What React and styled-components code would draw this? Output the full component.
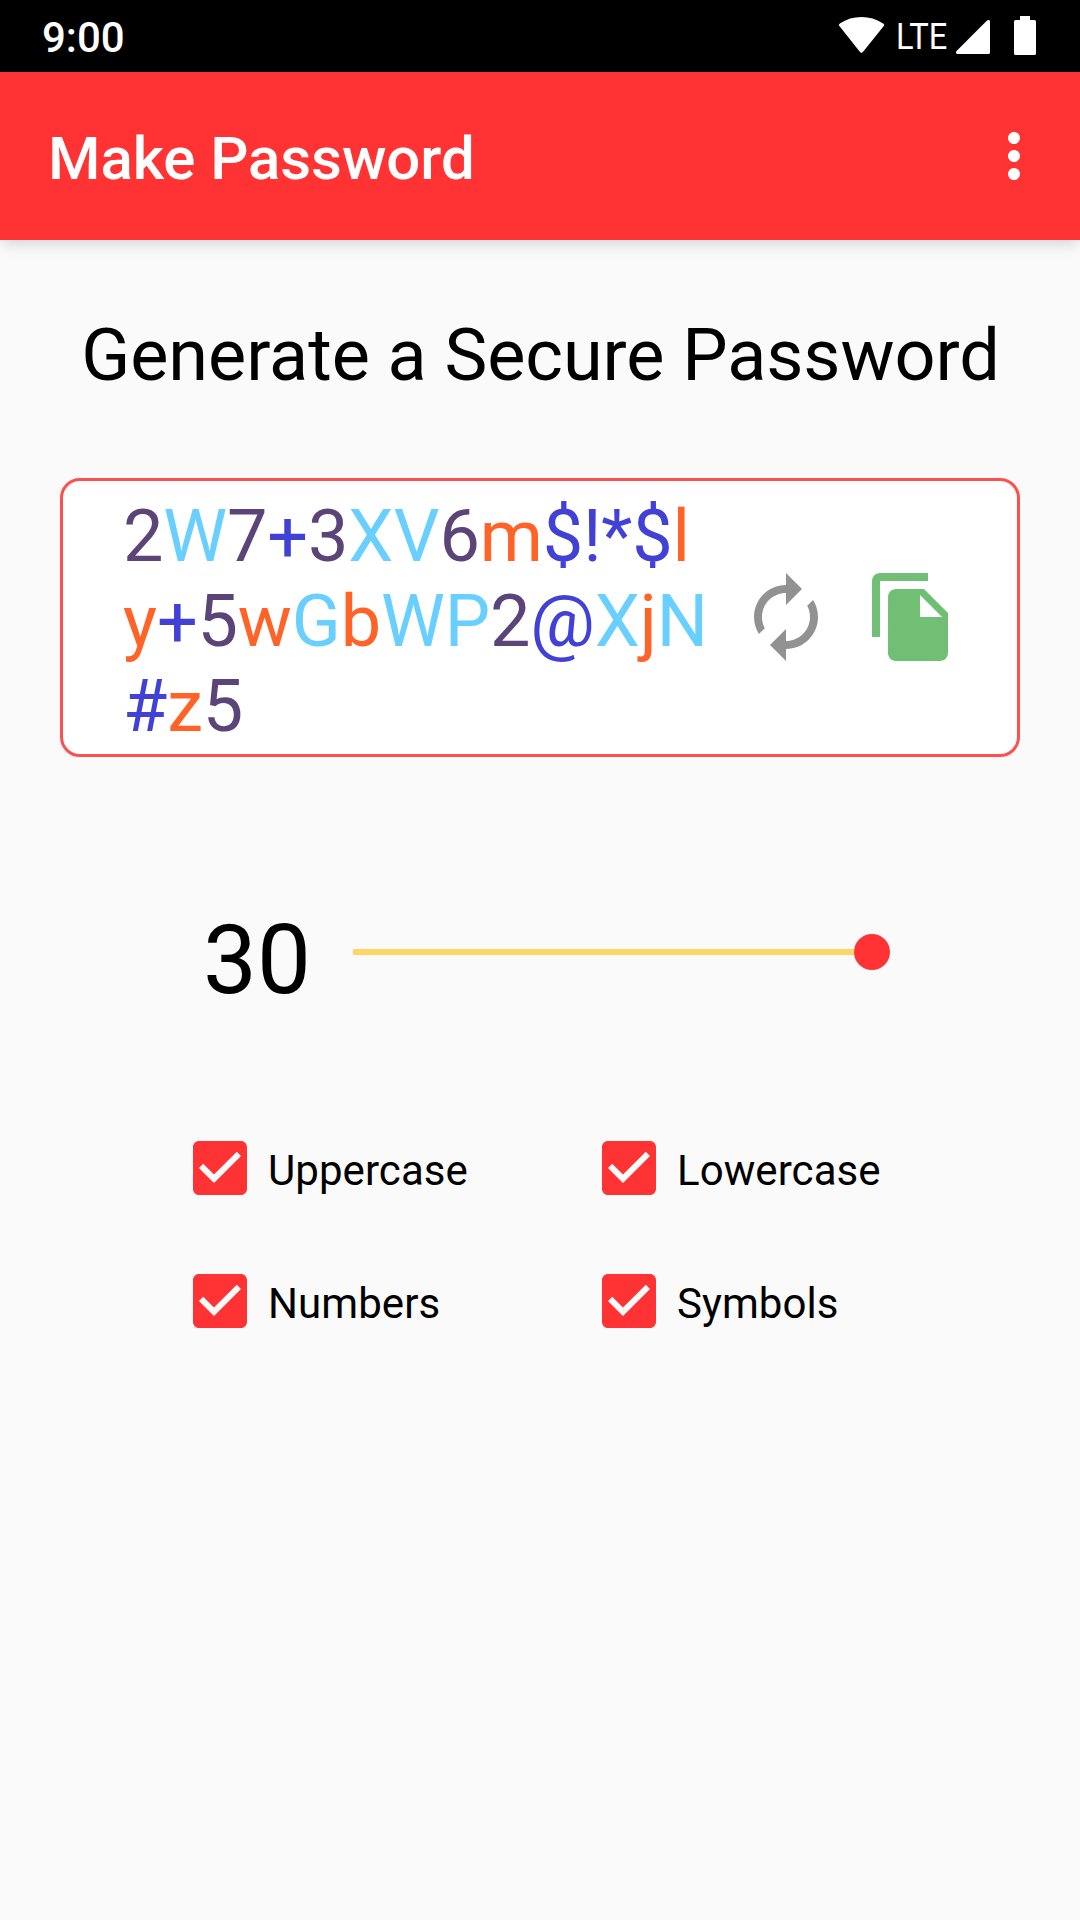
import React from "react";
import styled, { createGlobalStyle } from "styled-components";

const GlobalStyle = createGlobalStyle`
  * { box-sizing: border-box; }
  body { margin: 0; background: #fafafa; }
`;

const Screen = styled.div`
  display: flex;
  flex-direction: column;
  width: 1080px;
  height: 1920px;
  overflow: hidden;
  background: #fafafa;
  color: #000;
  font-family: Roboto, sans-serif;
`;

const StatusBar = styled.header`
  display: flex;
  flex: none;
  justify-content: space-between;
  height: 72px;
  padding: 0 44px 0 42px;
  background: #000;
  color: #fff;
`;

const Clock = styled.time`
  font-size: 42px;
  font-weight: 500;
  line-height: 75px;
`;

const StatusIcons = styled.div`
  display: flex;
  align-items: flex-start;
  height: 72px;
`;

const StatusGlyph = styled.svg`
  display: block;
  flex: none;
  width: ${(p) => p.$width}px;
  height: 72px;
  margin-left: ${(p) => p.$gap || 0}px;
  fill: #fff;
`;

const Network = styled.span`
  width: 46px;
  margin-left: 11px;
  font-size: 37.5px;
  line-height: 72px;
  white-space: nowrap;
  transform: scaleX(0.87);
  transform-origin: left;
`;

const Toolbar = styled.div`
  display: flex;
  flex: none;
  align-items: center;
  justify-content: space-between;
  height: 168px;
  padding: 0 30px 0 48px;
  background: #ff3333;
  color: #fff;
  box-shadow: 0 5px 14px -2px rgba(0, 0, 0, 0.17);
`;

const Title = styled.h1`
  margin: 0;
  padding-top: 5px;
  font-size: 60px;
  font-weight: 500;
  line-height: 70px;
  letter-spacing: -0.08px;
`;

const IconButton = styled.button`
  display: flex;
  flex: none;
  width: ${(p) => p.$size}px;
  height: ${(p) => p.$size}px;
  padding: 0;
  border: 0;
  background: none;
  color: ${(p) => p.$color};

  svg {
    width: 100%;
    height: 100%;
    fill: currentColor;
  }
`;

const Heading = styled.h2`
  margin: 74px 0 0;
  padding-left: 1px;
  font-size: 72px;
  font-weight: 400;
  line-height: 84px;
  letter-spacing: -0.06px;
  text-align: center;
  white-space: nowrap;
`;

const PasswordCard = styled.section`
  display: flex;
  height: 279px;
  margin: 80px 60px 0;
  padding: 13px 57px 0 60px;
  border: 3px solid #ff5050;
  border-radius: 20px;
  background: #fff;
`;

const Password = styled.div`
  width: 615px;
  font-size: 72px;
  line-height: 85px;
  letter-spacing: -0.18px;
  white-space: nowrap;
`;

const Char = styled.span`
  color: ${(p) => p.$color};
`;

const CardActions = styled.div`
  display: flex;
  gap: 30px;
  padding-top: 75px;
`;

const LengthRow = styled.section`
  display: flex;
  align-items: flex-start;
  height: 112px;
  margin: 147px 190px 0 203px;
`;

const LengthValue = styled.output`
  width: 150px;
  font-size: 96px;
  line-height: 112px;
`;

const Slider = styled.div`
  display: flex;
  flex: 1;
  align-items: center;
  height: 96px;
`;

const Track = styled.div`
  flex: 1;
  height: 6px;
  background: #fdd663;
`;

const Thumb = styled.div`
  width: 36px;
  height: 36px;
  border-radius: 50%;
  background: #ff3333;
`;

const Options = styled.section`
  display: grid;
  grid-template-columns: 409px 409px;
  grid-auto-rows: 72px;
  row-gap: 61px;
  margin: 116px 0 0 184px;
`;

const Option = styled.label`
  display: flex;
  align-items: center;
  font-size: 42px;
  line-height: 50px;
  letter-spacing: 0.07px;
`;

const CheckIcon = styled.svg`
  width: 72px;
  height: 72px;
  fill: #ff3333;
`;

const OptionText = styled.span`
  padding: 5px 0 0 12px;
`;

const LINES = ["2W7+3XV6m$!*$l", "y+5wGbWP2@XjN", "#z5"];
const OPTIONS = ["Uppercase", "Lowercase", "Numbers", "Symbols"];

function charColor(c) {
  if (/[0-9]/.test(c)) return "#5b4578";
  if (/[A-Z]/.test(c)) return "#69cfff";
  if (/[a-z]/.test(c)) return "#ff6328";
  return "#4141d6";
}

export default function App() {
  return (
    <>
      <GlobalStyle />
      <Screen>
        <StatusBar>
          <Clock>9:00</Clock>
          <StatusIcons>
            <StatusGlyph $width={46} viewBox="0 0 46 72">
              <path d="M.6 26.300Q-1 24.800 .9 23.400C13.500 14.800 31.500 14.800 44.100 23.400Q46 24.800 44.600 26.300L24.100 51.800Q22.500 54 20.800 51.800Z" />
            </StatusGlyph>
            <Network>LTE</Network>
            <StatusGlyph $width={34} $gap={14} viewBox="0 0 34 72">
              <path d="M31 20.600Q32 19.600 33 20Q34 20.300 34 21.500V52.500Q34 54 32.500 54H1.500Q0 54 0 52.500Q0 51.600 .8 50.800Z" />
            </StatusGlyph>
            <StatusGlyph $width={22} $gap={24} viewBox="0 0 22 72">
              <path d="M6 16H16V20H20.500Q22 20 22 21.500V53.500Q22 55 20.500 55H1.500Q0 55 0 53.500V21.500Q0 20 1.500 20H6Z" />
            </StatusGlyph>
          </StatusIcons>
        </StatusBar>
        <Toolbar>
          <Title>Make Password</Title>
          <IconButton $size={72} $color="#fff" aria-label="More options">
            <svg viewBox="0 0 24 24">
              <path d="M12 8c1.100 0 2-.9 2-2s-.9-2-2-2-2 .9-2 2 .9 2 2 2zm0 2c-1.100 0-2 .9-2 2s.9 2 2 2 2-.9 2-2-.9-2-2-2zm0 6c-1.100 0-2 .9-2 2s.9 2 2 2 2-.9 2-2-.9-2-2-2z" />
            </svg>
          </IconButton>
        </Toolbar>
        <Heading>Generate a Secure Password</Heading>
        <PasswordCard>
          <Password>
            {LINES.map((line) => (
              <div key={line}>
                {[...line].map((c, i) => (
                  <Char key={i} $color={charColor(c)}>{c}</Char>
                ))}
              </div>
            ))}
          </Password>
          <CardActions>
            <IconButton $size={96} $color="#929292" aria-label="Regenerate">
              <svg viewBox="0 0 24 24">
                <path d="M12 6v3l4-4-4-4v3c-4.420 0-8 3.580-8 8 0 1.570.460 3.030 1.240 4.260L6.700 14.800c-.450-.830-.700-1.790-.700-2.800 0-3.310 2.690-6 6-6zm6.760 1.740L17.300 9.200c.440.840.700 1.790.700 2.800 0 3.310-2.690 6-6 6v-3l-4 4 4 4v-3c4.420 0 8-3.580 8-8 0-1.570-.460-3.030-1.240-4.260z" />
              </svg>
            </IconButton>
            <IconButton $size={96} $color="#71bf74" aria-label="Copy">
              <svg viewBox="0 0 24 24">
                <path d="M16 1H4c-1.100 0-2 .9-2 2v14h2V3h12V1zm-1 4l6 6v10c0 1.100-.9 2-2 2H7.990C6.890 23 6 22.100 6 21l.010-14c0-1.100.890-2 1.990-2h7zm-1 7h5.500L14 6.500V12z" />
              </svg>
            </IconButton>
          </CardActions>
        </PasswordCard>
        <LengthRow>
          <LengthValue>30</LengthValue>
          <Slider>
            <Track />
            <Thumb />
          </Slider>
        </LengthRow>
        <Options>
          {OPTIONS.map((name) => (
            <Option key={name}>
              <CheckIcon viewBox="0 0 24 24">
                <path d="M19 3H5c-1.110 0-2 .9-2 2v14c0 1.100.890 2 2 2h14c1.110 0 2-.9 2-2V5c0-1.100-.890-2-2-2zm-9 14l-5-5 1.410-1.410L10 14.170l7.590-7.590L19 8l-9 9z" />
              </CheckIcon>
              <OptionText>{name}</OptionText>
            </Option>
          ))}
        </Options>
      </Screen>
    </>
  );
}
